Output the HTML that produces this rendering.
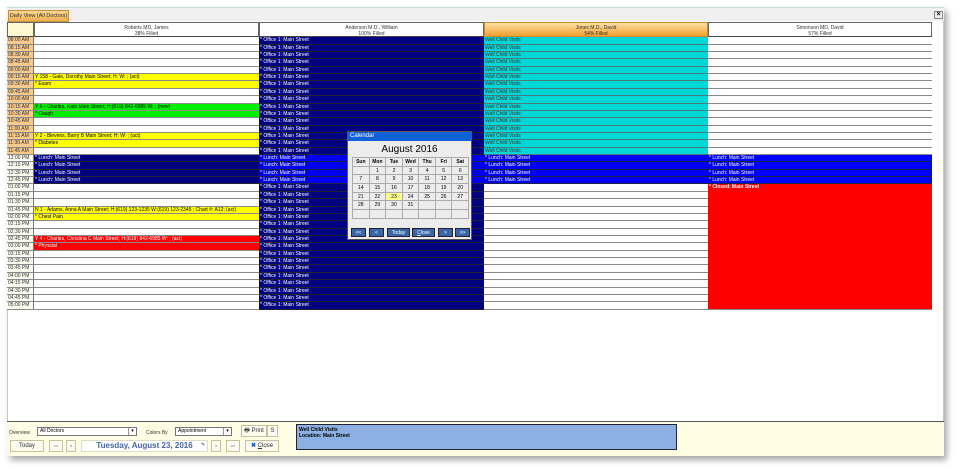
<!DOCTYPE html>
<html><head><meta charset="utf-8"><style>
*{margin:0;padding:0;box-sizing:border-box}
body{width:960px;height:473px;background:#fff;font-family:"Liberation Sans",sans-serif;position:relative;overflow:hidden}
.win{position:absolute;left:7px;top:7px;width:937px;height:449px;background:#fff;border:1px solid #c8c8c8;box-shadow:3px 4px 6px rgba(0,0,0,.35)}
.strip{position:absolute;left:7px;top:7px;width:937px;height:14px;background:#f0f0f0;border-top:1px solid #bfe0d8}
.tab{position:absolute;left:8px;top:10px;width:61px;height:12px;background:linear-gradient(#fad890,#f0b050);border:1px solid #c8903a;font-size:5.5px;line-height:10px;text-align:center;color:#333}
.xbtn{position:absolute;left:934px;top:11px;width:9px;height:8px;border:1px solid #888;background:#eee;font-size:7px;line-height:6px;text-align:center;font-weight:bold}
.col{position:absolute;top:22px}
.hd{height:15.3px;border:1px solid #666;border-bottom:1px solid #444;font-size:5px;line-height:6px;text-align:center;padding-top:1.5px;color:#333;background:#fff}
.r{height:7.36px;border-bottom:1px solid #8a8a8a;font-size:5px;line-height:6.3px;padding-left:1px;white-space:nowrap;overflow:hidden;color:#000}
.t .r{background:#f7c98a;color:#333;border-right:1px solid #777}
.t .p{background:#fbfbf0}
.y{background:#ffff00}.g{background:#00ee00}.rd{background:#ff0000;color:#fff}
.n{background:#000080;color:#fff;border-bottom-color:#223}
.lb{background:#0000ee;color:#fff;border-bottom-color:#224}
.c{background:#00d8d8;color:#333;border-bottom-color:#4a7a7a}
.w{background:#fff}
.cal{position:absolute;left:347px;top:131px;width:125px;height:109px;background:#ececec;border:1px solid #555;font-size:5px}
.cal .tb{height:9px;background:#1060d8;color:#fff;font-size:6px;line-height:9px;padding-left:2px}
.cal h3{font-weight:normal;text-align:center;font-size:10px;margin:3px 0 2px}
.cal table{border-collapse:collapse;margin-left:4px;width:117px}
.cal td{border:1px solid #aaa;height:8.7px;text-align:center;font-size:5px;width:16.7px}
.cal .hh td{font-weight:bold}
.cb{position:absolute;top:96px;height:9px;background:#3a66a8;color:#fff;font-size:5px;line-height:9px;text-align:center;border:1px solid #223}
.bp{position:absolute;left:7px;top:421px;width:937px;height:35px;background:#fffde4;border-top:1px solid #555}
.lbl{position:absolute;font-size:5px;color:#333}
.sel{position:absolute;height:9px;background:#fff;border:1px solid #777;font-size:5px;line-height:7px;padding-left:2px}
.sel i{position:absolute;right:0;top:0;width:8px;height:7px;border-left:1px solid #999;font-style:normal;font-size:5px;text-align:center}
.btn{position:absolute;height:12px;border:1px solid #c9c0a0;background:#fdfaf0;font-size:6px;line-height:10px;text-align:center;color:#333}
</style></head><body>
<div class="win"></div>
<div class="strip"></div>
<div class="tab">Daily View (All Doctors)</div>
<div class="xbtn">×</div>

<div class="col t" style="left:7px;width:27px">
<div class="hd" style="background:#fff8d0;border-right:1px solid #666"></div>
<div class="r">08:00 AM</div><div class="r">08:15 AM</div><div class="r">08:30 AM</div><div class="r">08:45 AM</div><div class="r">09:00 AM</div><div class="r">09:15 AM</div><div class="r">09:30 AM</div><div class="r">09:45 AM</div><div class="r">10:00 AM</div><div class="r">10:15 AM</div><div class="r">10:30 AM</div><div class="r">10:45 AM</div><div class="r">11:00 AM</div><div class="r">11:15 AM</div><div class="r">11:30 AM</div><div class="r">11:45 AM</div>
<div class="r p">12:00 PM</div><div class="r p">12:15 PM</div><div class="r p">12:30 PM</div><div class="r p">12:45 PM</div><div class="r p">01:00 PM</div><div class="r p">01:15 PM</div><div class="r p">01:30 PM</div><div class="r p">01:45 PM</div><div class="r p">02:00 PM</div><div class="r p">02:15 PM</div><div class="r p">02:30 PM</div><div class="r p">02:45 PM</div><div class="r p">03:00 PM</div><div class="r p">03:15 PM</div><div class="r p">03:30 PM</div><div class="r p">03:45 PM</div><div class="r p">04:00 PM</div><div class="r p">04:15 PM</div><div class="r p">04:30 PM</div><div class="r p">04:45 PM</div><div class="r p">05:00 PM</div>
</div>

<div class="col" style="left:34px;width:225px">
<div class="hd">Roberts MD, James<br>38% Filled</div>
<div class="r"></div><div class="r"></div><div class="r"></div><div class="r"></div><div class="r"></div>
<div class="r y">Y 158 - Gale, Dorothy Main Street; H: W: ; (act)</div><div class="r y">* Exam</div>
<div class="r"></div><div class="r"></div>
<div class="r g">Y 6 - Charles, Kate Main Street; H:(619) 842-6985 W: ; (new)</div><div class="r g">* Cough</div>
<div class="r"></div><div class="r"></div>
<div class="r y">Y 2 - Blevens, Barry B Main Street; H: W: ; (act)</div><div class="r y">* Diabetes</div>
<div class="r"></div>
<div class="r n">* Lunch: Main Street</div><div class="r n">* Lunch: Main Street</div><div class="r n">* Lunch: Main Street</div><div class="r n">* Lunch: Main Street</div>
<div class="r"></div><div class="r"></div><div class="r"></div>
<div class="r y">N 1 - Adams, Anna A Main Street; H:(619) 123-1235 W:(619) 123-2345 ; Chart #: A12; (act)</div><div class="r y">* Chest Pain</div>
<div class="r"></div><div class="r"></div>
<div class="r rd">Y 4 - Charles, Christina C Main Street; H:(619) 842-6985 W: ; (act)</div><div class="r rd">* Physcial</div>
<div class="r"></div><div class="r"></div><div class="r"></div><div class="r"></div><div class="r"></div><div class="r"></div><div class="r"></div><div class="r"></div>
</div>

<div class="col" style="left:259px;width:225px">
<div class="hd">Anderson M.D., William<br>100% Filled</div>
<div class="r n">* Office 1: Main Street</div><div class="r n">* Office 1: Main Street</div><div class="r n">* Office 1: Main Street</div><div class="r n">* Office 1: Main Street</div><div class="r n">* Office 1: Main Street</div><div class="r n">* Office 1: Main Street</div><div class="r n">* Office 1: Main Street</div><div class="r n">* Office 1: Main Street</div><div class="r n">* Office 1: Main Street</div><div class="r n">* Office 1: Main Street</div><div class="r n">* Office 1: Main Street</div><div class="r n">* Office 1: Main Street</div><div class="r n">* Office 1: Main Street</div><div class="r n">* Office 1: Main Street</div><div class="r n">* Office 1: Main Street</div><div class="r n">* Office 1: Main Street</div>
<div class="r lb">* Lunch: Main Street</div><div class="r lb">* Lunch: Main Street</div><div class="r lb">* Lunch: Main Street</div><div class="r lb">* Lunch: Main Street</div>
<div class="r n">* Office 1: Main Street</div><div class="r n">* Office 1: Main Street</div><div class="r n">* Office 1: Main Street</div><div class="r n">* Office 1: Main Street</div><div class="r n">* Office 1: Main Street</div><div class="r n">* Office 1: Main Street</div><div class="r n">* Office 1: Main Street</div><div class="r n">* Office 1: Main Street</div><div class="r n">* Office 1: Main Street</div><div class="r n">* Office 1: Main Street</div><div class="r n">* Office 1: Main Street</div><div class="r n">* Office 1: Main Street</div><div class="r n">* Office 1: Main Street</div><div class="r n">* Office 1: Main Street</div><div class="r n">* Office 1: Main Street</div><div class="r n">* Office 1: Main Street</div><div class="r n">* Office 1: Main Street</div>
</div>

<div class="col" style="left:484px;width:224px">
<div class="hd" style="background:linear-gradient(#fde0a0,#f0a030);border-color:#c88a30">Jones M.D., David<br>54% Filled</div>
<div class="r c">Well Child Visits</div><div class="r c">Well Child Visits</div><div class="r c">Well Child Visits</div><div class="r c">Well Child Visits</div><div class="r c">Well Child Visits</div><div class="r c">Well Child Visits</div><div class="r c">Well Child Visits</div><div class="r c">Well Child Visits</div><div class="r c">Well Child Visits</div><div class="r c">Well Child Visits</div><div class="r c">Well Child Visits</div><div class="r c">Well Child Visits</div><div class="r c">Well Child Visits</div><div class="r c">Well Child Visits</div><div class="r c">Well Child Visits</div><div class="r c">Well Child Visits</div>
<div class="r lb">* Lunch: Main Street</div><div class="r lb">* Lunch: Main Street</div><div class="r lb">* Lunch: Main Street</div><div class="r lb">* Lunch: Main Street</div>
<div class="r"></div><div class="r"></div><div class="r"></div><div class="r"></div><div class="r"></div><div class="r"></div><div class="r"></div><div class="r"></div><div class="r"></div><div class="r"></div><div class="r"></div><div class="r"></div><div class="r"></div><div class="r"></div><div class="r"></div><div class="r"></div><div class="r"></div>
</div>

<div class="col" style="left:708px;width:224px">
<div class="hd">Simonson MD, David<br>57% Filled</div>
<div class="r"></div><div class="r"></div><div class="r"></div><div class="r"></div><div class="r"></div><div class="r"></div><div class="r"></div><div class="r"></div><div class="r"></div><div class="r"></div><div class="r"></div><div class="r"></div><div class="r"></div><div class="r"></div><div class="r"></div><div class="r"></div>
<div class="r lb" style="background:#0000ff">* Lunch: Main Street</div><div class="r lb" style="background:#0000ff">* Lunch: Main Street</div><div class="r lb" style="background:#0000ff">* Lunch: Main Street</div><div class="r lb" style="background:#0000ff">* Lunch: Main Street</div>
<div style="height:125.1px;background:#ff0000;color:#fff;font-size:5px;font-weight:bold;padding-left:1px;line-height:6px;border-bottom:1px solid #888">* Closed: Main Street</div>
</div>

<div class="cal">
<div class="tb">Calendar</div>
<h3>August 2016</h3>
<table>
<tr class="hh"><td>Sun</td><td>Mon</td><td>Tue</td><td>Wed</td><td>Thu</td><td>Fri</td><td>Sat</td></tr>
<tr><td></td><td>1</td><td>2</td><td>3</td><td>4</td><td>5</td><td>6</td></tr>
<tr><td>7</td><td>8</td><td>9</td><td>10</td><td>11</td><td>12</td><td>13</td></tr>
<tr><td>14</td><td>15</td><td>16</td><td>17</td><td>18</td><td>19</td><td>20</td></tr>
<tr><td>21</td><td>22</td><td style="background:#ffff90">23</td><td>24</td><td>25</td><td>26</td><td>27</td></tr>
<tr><td>28</td><td>29</td><td>30</td><td>31</td><td></td><td></td><td></td></tr>
<tr><td></td><td></td><td></td><td></td><td></td><td></td><td></td></tr>
</table>
<div class="cb" style="left:3px;width:15px">&lt;&lt;</div>
<div class="cb" style="left:21px;width:15px">&lt;</div>
<div class="cb" style="left:39px;width:23px">Today</div>
<div class="cb" style="left:64px;width:23px"><u>C</u>lose</div>
<div class="cb" style="left:90px;width:15px">&gt;</div>
<div class="cb" style="left:107px;width:15px">&gt;&gt;</div>
</div>

<div class="bp"></div>
<div class="lbl" style="left:9px;top:430px">Overview</div>
<div class="sel" style="left:37px;top:427px;width:100px">All Doctors<i>▾</i></div>
<div class="lbl" style="left:146px;top:430px">Colors By</div>
<div class="sel" style="left:175px;top:427px;width:57px">Appointment<i>▾</i></div>
<div class="btn" style="left:241px;top:425px;width:26px">🖶 Print</div>
<div class="btn" style="left:267px;top:425px;width:11px">S</div>
<div class="btn" style="left:10px;top:440px;width:34px">Today</div>
<div class="btn" style="left:49px;top:440px;width:14px;font-size:4px">&lt;&lt;</div>
<div class="btn" style="left:66px;top:440px;width:10px;font-size:4px">&lt;</div>
<div class="btn" style="left:81px;top:440px;width:127px;background:#fff;border-color:#e0dcc8;color:#4a64a8;font-weight:bold;font-size:8px">Tuesday, August 23, 2016</div>
<div class="lbl" style="left:201px;top:442px">✎</div>
<div class="btn" style="left:211px;top:440px;width:10px;font-size:4px">&gt;</div>
<div class="btn" style="left:226px;top:440px;width:14px;font-size:4px">&gt;&gt;</div>
<div class="btn" style="left:245px;top:440px;width:34px"><b style="color:#1a5ad0">✖</b> <u>C</u>lose</div>
<div style="position:absolute;left:296px;top:424px;width:381px;height:26px;background:#8cb0e2;border:1px solid #223;font-size:5px;font-weight:bold;padding:2px;line-height:6px">Well Child Visits<br>Location: Main Street</div>
</body></html>
